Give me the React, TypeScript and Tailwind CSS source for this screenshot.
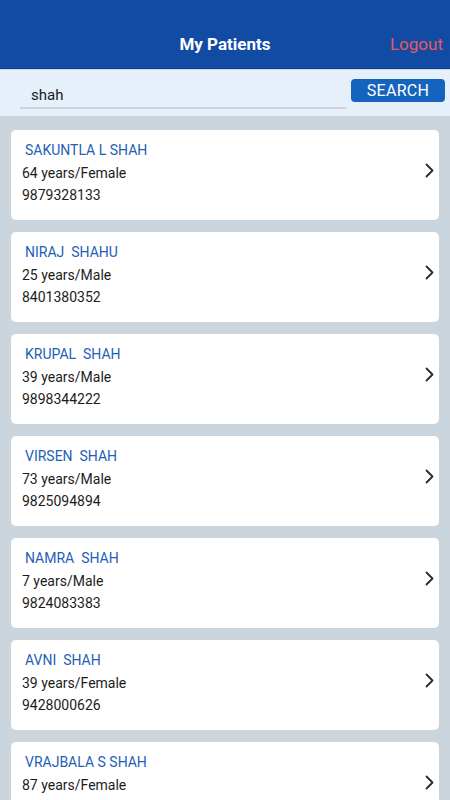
import React from 'react';

interface Patient {
  name: string;
  age: number;
  gender: string;
  phone: string;
}

const patients: Patient[] = [
  { name: 'SAKUNTLA L SHAH', age: 64, gender: 'Female', phone: '9879328133' },
  { name: 'NIRAJ  SHAHU', age: 25, gender: 'Male', phone: '8401380352' },
  { name: 'KRUPAL  SHAH', age: 39, gender: 'Male', phone: '9898344222' },
  { name: 'VIRSEN  SHAH', age: 73, gender: 'Male', phone: '9825094894' },
  { name: 'NAMRA  SHAH', age: 7, gender: 'Male', phone: '9824083383' },
  { name: 'AVNI  SHAH', age: 39, gender: 'Female', phone: '9428000626' },
  { name: 'VRAJBALA S SHAH', age: 87, gender: 'Female', phone: '9825012345' },
];

const Chevron = () => (
  <svg width="9" height="15" viewBox="0 0 9 15" fill="none">
    <path d="M1.5 1.5 L7.5 7.5 L1.5 13.5" stroke="#2b2b2b" strokeWidth="1.8" strokeLinecap="round" strokeLinejoin="round" />
  </svg>
);

const App: React.FC = () => {
  return (
    <div className="w-[450px] h-[800px] overflow-hidden bg-[#cbd5de] font-['Roboto','Liberation_Sans',sans-serif]">
      {/* header */}
      <div className="h-[69px] bg-[#114ba4] border-b border-[#0d3f8c] relative">
        <div className="pt-[32px] text-center text-white text-[17px] font-bold leading-[24px]">My Patients</div>
        <div className="absolute right-[7px] top-[32px] text-[#e8595c] text-[17px] leading-[24px]">Logout</div>
      </div>

      {/* search */}
      <div className="h-[47px] bg-[#e6f0fa] border-t border-[#c9d8ea] flex items-start">
        <div className="ml-[20px] mt-[14px] w-[326px] border-b-2 border-[#cdd3da] pl-[11px] h-[25px] flex items-center text-[15px] text-[#1a1a1a]">
          shah
        </div>
        <button className="ml-[5px] mt-[9px] w-[94px] h-[23px] rounded-[4px] bg-[#1463bf] text-white text-[16px] leading-[23px] tracking-[0.3px]">
          SEARCH
        </button>
      </div>

      {/* list */}
      <div className="flex flex-col gap-[12px] px-[11px] pt-[14px]">
        {patients.map((p, i) => (
          <div key={i} className="h-[90px] bg-white rounded-[5px] flex items-center shrink-0">
            <div className="flex-1 self-start pt-[11px] pl-[11px]">
              <div className="ml-[3px] text-[14px] leading-[18px] text-[#2360b5] whitespace-pre">{p.name}</div>
              <div className="mt-[3px] text-[14px] leading-[22px] text-[#1c1c1c]">{p.age} years/{p.gender}</div>
              <div className="text-[14px] leading-[22px] text-[#1c1c1c]">{p.phone}</div>
            </div>
            <div className="pr-[5px] mt-[-10px]">
              <Chevron />
            </div>
          </div>
        ))}
      </div>
    </div>
  );
};

export default App;
